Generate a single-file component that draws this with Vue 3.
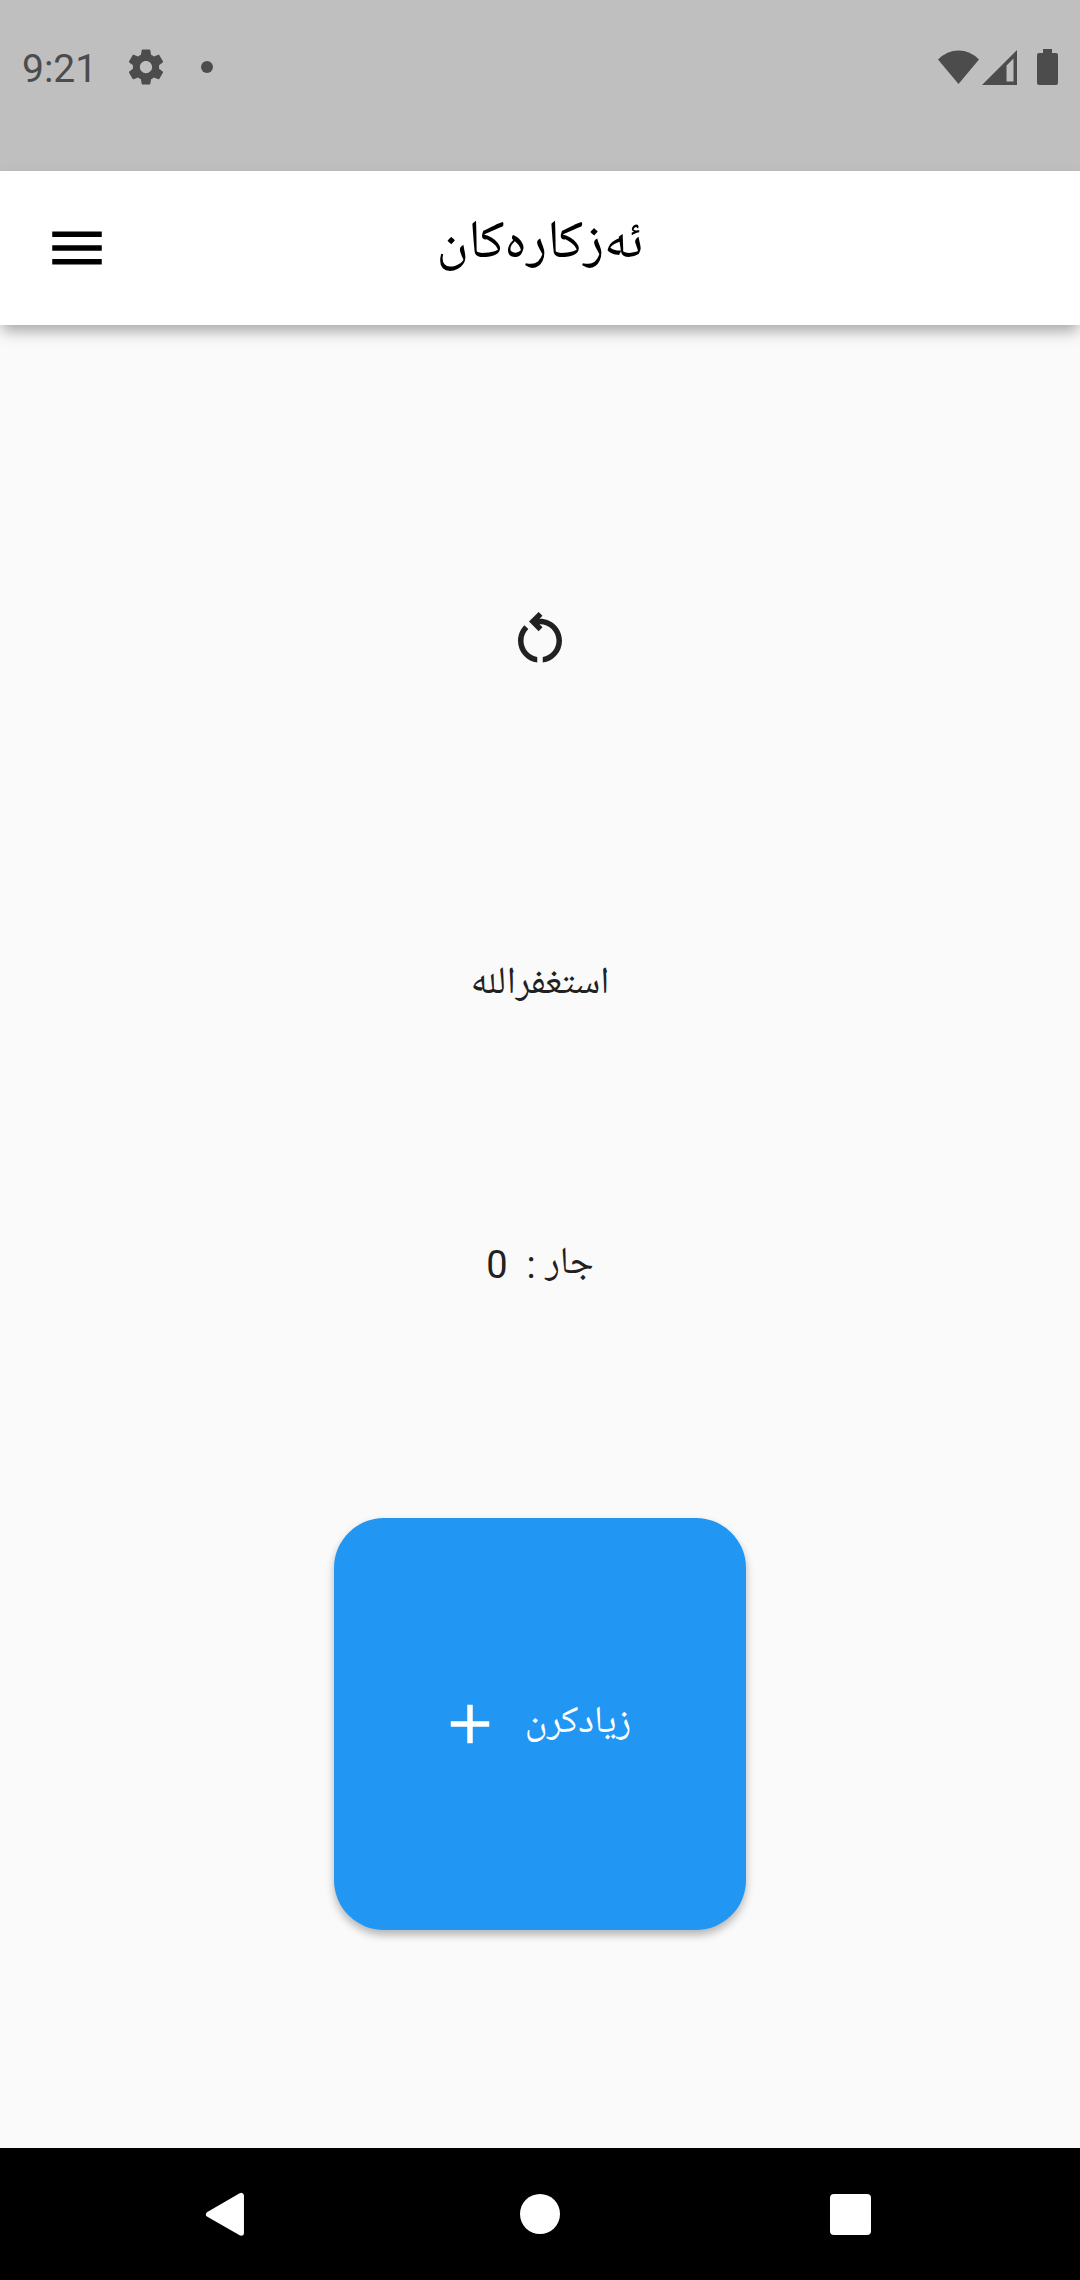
<script setup>
import { computed, ref } from 'vue'

const count = ref(0)
const countText = computed(() => `جار :  ${count.value}`)
</script>

<template>
  <div class="screen">
    <div class="status">
      <div class="status-group">
        <span class="clock">9:21</span>
        <svg class="gear" viewBox="0 0 24 24" aria-hidden="true">
          <path d="M19.43 12.98c.04-.32.07-.64.07-.98s-.03-.66-.07-.98l2.11-1.65c.19-.15.24-.42.12-.64l-2-3.46c-.12-.22-.39-.3-.61-.22l-2.49 1c-.52-.4-1.08-.73-1.69-.98l-.38-2.65C14.46 2.18 14.25 2 14 2h-4c-.25 0-.46.18-.49.42l-.38 2.65c-.61.25-1.17.59-1.69.98l-2.49-1c-.23-.09-.49 0-.61.22l-2 3.46c-.13.22-.07.49.12.64l2.11 1.65c-.04.32-.07.65-.07.98s.03.66.07.98l-2.11 1.65c-.19.15-.24.42-.12.64l2 3.46c.12.22.39.3.61.22l2.49-1c.52.4 1.08.73 1.69.98l.38 2.65c.03.24.24.42.49.42h4c.25 0 .46-.18.49-.42l.38-2.65c.61-.25 1.17-.59 1.69-.98l2.49 1c.23.09.49 0 .61-.22l2-3.46c.12-.22.07-.49-.12-.64l-2.11-1.65zM12 15.5c-1.93 0-3.5-1.57-3.5-3.5s1.57-3.5 3.5-3.5 3.5 1.57 3.5 3.5-1.57 3.5-3.5 3.5z" />
        </svg>
        <span class="dot"></span>
      </div>
      <div class="status-group">
        <svg class="wifi" viewBox="0 0 42 35" aria-hidden="true">
          <path d="M0 9.500Q9 0.500 20.500 0.500T41 9.500L20.500 34Z" />
        </svg>
        <svg class="signal" viewBox="0 0 35 35" aria-hidden="true">
          <path fill-rule="evenodd" d="M35 0V35H0ZM31.500 8.500L24.500 15.500V31.500H31.500Z" />
        </svg>
        <svg class="battery" viewBox="0 0 21 36" aria-hidden="true">
          <path d="M6 0H15V4H19Q21 4 21 6V34Q21 36 19 36H2Q0 36 0 34V6Q0 4 2 4H6Z" />
        </svg>
      </div>
    </div>

    <header class="app-bar">
      <button class="icon-button" type="button" aria-label="Menu">
        <svg class="icon" viewBox="0 0 24 24"><path d="M3 18h18v-2H3v2zm0-5h18v-2H3v2zm0-7v2h18V6H3z" /></svg>
      </button>
      <h1 class="title" dir="rtl" lang="ku">ئەزکارەکان</h1>
    </header>

    <main class="content">
      <button class="icon-button" type="button" aria-label="Reset" @click="count = 0">
        <svg class="icon" viewBox="0 0 24 24">
          <path d="M6 13c0-1.650.67-3.150 1.760-4.240L6.340 7.340C4.900 8.790 4 10.790 4 13c0 4.080 3.050 7.440 7 7.930v-2.020c-2.830-.48-5-2.940-5-5.910zm14 0c0-4.420-3.580-8-8-8-.06 0-.12.01-.18.01l1.090-1.090L11.500 2.500 8 6l3.500 3.500 1.410-1.410-1.080-1.080c.06 0 .12-.01.17-.01 3.310 0 6 2.690 6 6 0 2.970-2.170 5.430-5 5.910v2.020c3.950-.49 7-3.850 7-7.930z" />
        </svg>
      </button>
      <p class="phrase" dir="rtl" lang="ar">استغفرالله</p>
      <p class="count" dir="rtl" lang="ku">{{ countText }}</p>
      <button class="add" type="button" @click="count++">
        <svg class="icon" viewBox="0 0 24 24" aria-hidden="true"><path d="M19 13h-6v6h-2v-6H5v-2h6V5h2v6h6v2z" /></svg>
        <span class="add-label" dir="rtl" lang="ku">زیادکرن</span>
      </button>
    </main>

    <nav class="system-nav">
      <button type="button" aria-label="Back">
        <svg viewBox="0 0 48 48"><path d="M4 24L38 4V44Z" stroke="#fff" stroke-width="6" stroke-linejoin="round" transform="translate(1 2) scale(.95 .93)" /></svg>
      </button>
      <button type="button" aria-label="Home">
        <svg viewBox="0 0 48 48"><circle cx="24" cy="24" r="20" /></svg>
      </button>
      <button type="button" aria-label="Recents">
        <svg viewBox="0 0 48 48"><rect x="2" y="4" width="41" height="41" rx="4" /></svg>
      </button>
    </nav>
  </div>
</template>

<style>
body {
  margin: 0;
}
</style>

<style scoped>
.screen {
  display: flex;
  flex-direction: column;
  min-height: 100vh;
  background: #fafafa;
  color: #212121;
  font-family: Roboto, "Noto Naskh Arabic UI", "Noto Naskh Arabic", "Noto Sans Arabic", "DejaVu Sans", sans-serif;
}

button {
  display: flex;
  align-items: center;
  justify-content: center;
  margin: 0;
  padding: 0;
  border: 0;
  background: none;
  color: inherit;
  font: inherit;
  cursor: pointer;
}

svg {
  display: block;
  fill: currentColor;
}

.status {
  display: flex;
  justify-content: space-between;
  box-sizing: border-box;
  height: 171px;
  padding: 46px 22px 0;
  background: #bfbfbf;
  color: #4c4c4c;
}

.status-group {
  display: flex;
  align-items: center;
  height: 42px;
}

.clock {
  padding-top: 4px;
  font-size: 39px;
  line-height: 48px;
}

.gear {
  width: 42px;
  height: 42px;
  margin: 0 34px 0 28px;
}

.dot {
  width: 12px;
  height: 12px;
  border-radius: 50%;
  background: currentColor;
}

.wifi {
  width: 42px;
  height: 35px;
}

.signal {
  width: 35px;
  height: 35px;
  margin: 0 20px 0 2px;
}

.battery {
  width: 21px;
  height: 36px;
}

.app-bar {
  display: grid;
  grid-template-columns: 66px 1fr 66px;
  align-items: center;
  height: 154px;
  padding: 0 44px;
  background: #fff;
  color: #000;
  box-shadow: 0 8px 14px -2px rgba(0, 0, 0, 0.34);
}

.icon,
.icon-button {
  width: 66px;
  height: 66px;
}

.title {
  margin: 0;
  padding-bottom: 4px;
  font-size: 54px;
  font-weight: 400;
  line-height: 80px;
  text-align: center;
}

.content {
  display: flex;
  flex: 1;
  flex-direction: column;
  align-items: center;
  padding: 280px 0 216px;
}

.phrase,
.count {
  margin: 0;
  font-size: 38px;
  line-height: 60px;
}

.phrase {
  margin-top: 284px;
}

.count {
  margin-top: 220px;
  white-space: pre;
}

.add {
  gap: 20px;
  width: 412px;
  height: 412px;
  margin-top: 223px;
  border-radius: 50px;
  background: #2196f3;
  color: #fff;
  box-shadow: 0 5px 8px rgba(0, 0, 0, 0.28);
}

.add-label {
  padding: 0 12px 0 2px;
  font-size: 38px;
  line-height: 60px;
}

.system-nav {
  display: flex;
  height: 132px;
  padding: 0 72px;
  background: #000;
  color: #fff;
}

.system-nav button {
  flex: 1;
}

.system-nav svg {
  width: 48px;
  height: 48px;
}
</style>
